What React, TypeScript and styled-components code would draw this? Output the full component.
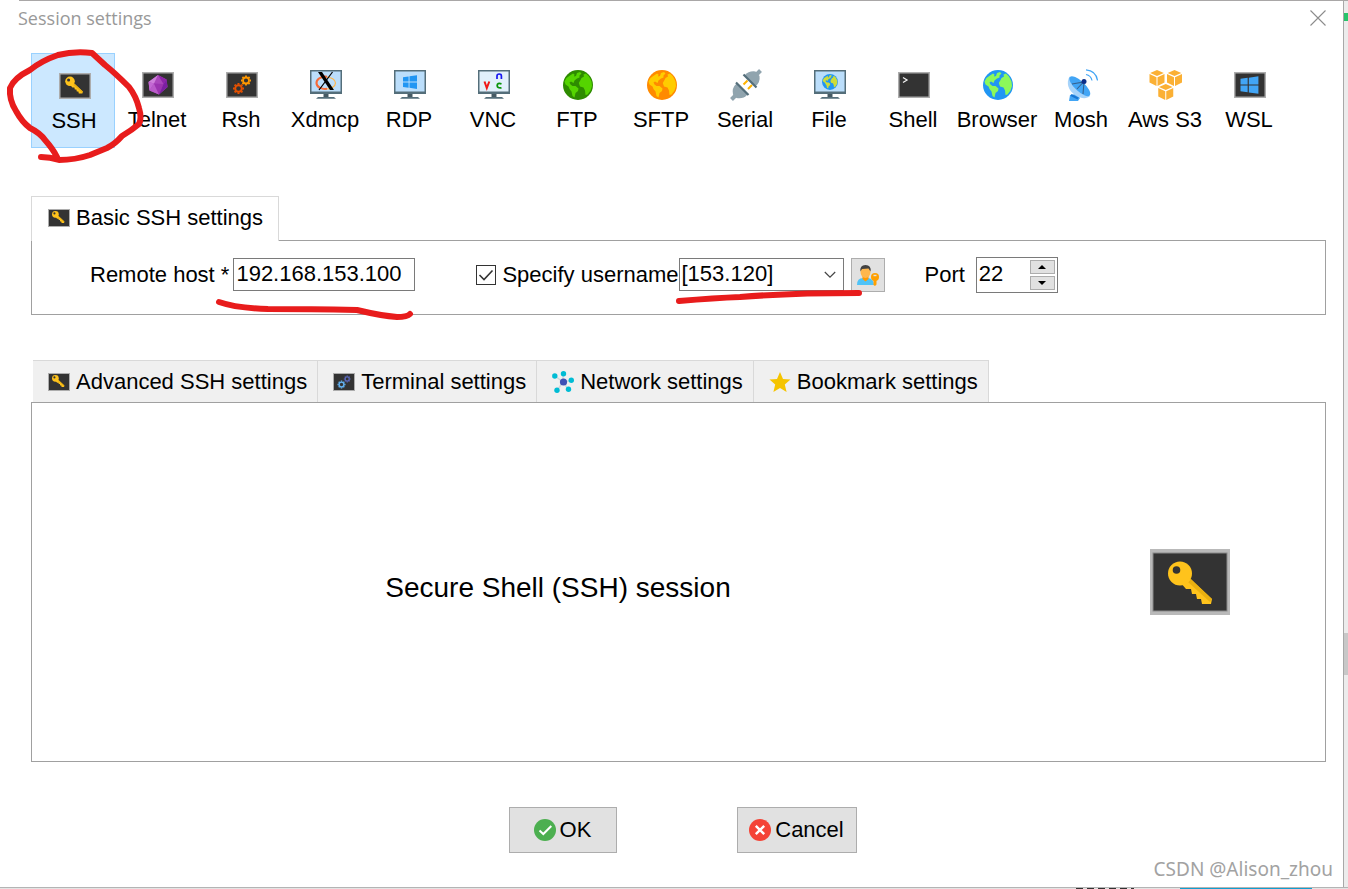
import React, { useState } from 'react';
import styled, { createGlobalStyle } from 'styled-components';

const GlobalStyle = createGlobalStyle`
  *, *::before, *::after { box-sizing: border-box; }
  body {
    margin: 0;
    background: #e9e9e9;
    color: #000;
    font-family: "Liberation Sans", Arial, sans-serif;
    font-size: 22px;
    line-height: 26px;
  }
  button, input, select { font: inherit; color: inherit; margin: 0; }
  svg { display: block; flex: none; }
`;

/* ---------- layout ---------- */

const Desktop = styled.div`
  position: relative;
  display: flex;
  flex-direction: column;
  min-height: 100vh;
`;

const Middle = styled.div`
  display: flex;
  flex: 1;
`;

const Dialog = styled.main`
  position: relative;
  display: flex;
  flex: 1;
  flex-direction: column;
  min-width: 0;
  background: #fff;
  border-right: 1px solid #a8a8a8;
`;

const SideStrip = styled.div`
  display: flex;
  flex-direction: column;
  width: 4px;
  background: #ececec;
`;

const SideBlock = styled.span<{ $top: number; $height: number; $color: string }>`
  margin-top: ${(p) => p.$top}px;
  height: ${(p) => p.$height}px;
  background: ${(p) => p.$color};
`;

const EdgeLine = styled.div<{ $height: number }>`
  display: flex;
  flex: none;
  height: ${(p) => p.$height}px;
  padding-left: 19px;
  background: #fff;
  &::before {
    content: "";
    flex: 1;
    background: #a9a7a7;
  }
`;

const BottomStrip = styled.div`
  display: flex;
  flex: none;
  justify-content: flex-end;
  gap: 46px;
  height: 2px;
  padding-right: 36px;
  border-top: 1px solid #b4b4b4;
  background: #e4e4e4;
  &::before {
    content: "";
    width: 58px;
    background: repeating-linear-gradient(90deg, #333 0 7px, #e4e4e4 7px 11px);
  }
  &::after {
    content: "";
    width: 132px;
    background: #0f9fd0;
  }
`;

const TitleBar = styled.header`
  display: flex;
  align-items: center;
  justify-content: space-between;
  height: 34px;
  padding: 0 17px 0 18px;
`;

const Title = styled.h1`
  margin: 0;
  color: #999;
  font: 400 18px/24px "Open Sans", "Noto Sans", sans-serif;
`;

const CloseButton = styled.button`
  padding: 0;
  border: 0;
  background: none;
`;

const Toolbar = styled.nav`
  display: flex;
  padding: 18px 17px 0 31px;
`;

const Tool = styled.button<{ $active?: boolean }>`
  display: flex;
  flex-direction: column;
  align-items: center;
  gap: 6px;
  width: 84px;
  height: 95px;
  padding: ${(p) => (p.$active ? '16px 0 0 2px' : '15px 0 0')};
  border: 1px solid ${(p) => (p.$active ? '#99d1ff' : 'transparent')};
  background: ${(p) => (p.$active ? '#cce8ff' : 'transparent')};
  white-space: nowrap;
`;

const Section = styled.section<{ $top: number }>`
  margin: ${(p) => p.$top}px 17px 0 31px;
`;

const MainTab = styled.button`
  position: relative;
  display: flex;
  align-items: center;
  gap: 6px;
  height: 45px;
  margin-bottom: -1px;
  padding: 0 15px 3px 16px;
  border: 1px solid #d9d9d9;
  border-bottom: 0;
  background: #fff;
`;

const BasicPanel = styled.div`
  display: flex;
  align-items: center;
  height: 75px;
  padding: 0 58px 6px;
  border: 1px solid #a0a0a0;
`;

const Field = styled.div<{ $gap: number; $after: number }>`
  display: flex;
  align-items: center;
  gap: ${(p) => p.$gap}px;
  margin-right: ${(p) => p.$after}px;
  white-space: nowrap;
`;

const HostInput = styled.input`
  width: 182px;
  height: 33px;
  padding: 0 2px 2px;
  border: 1px solid #7a7a7a;
  background: #fff;
`;

const CheckBox = styled.span`
  display: grid;
  width: 20px;
  height: 20px;
  & > * { grid-area: 1 / 1; }
  & > svg { pointer-events: none; }
`;

const CheckInput = styled.input`
  appearance: none;
  width: 20px;
  height: 20px;
  border: 1px solid #333;
  background: #fff;
  & + svg { visibility: hidden; }
  &:checked + svg { visibility: visible; }
`;

const SelectWrap = styled.span`
  display: grid;
  align-items: center;
  width: 165px;
  height: 33px;
  & > * { grid-area: 1 / 1; }
  & > svg { justify-self: end; margin-right: 8px; pointer-events: none; }
`;

const UserSelect = styled.select`
  appearance: none;
  width: 100%;
  height: 33px;
  padding: 0 24px 2px 2px;
  border: 1px solid #7a7a7a;
  border-radius: 0;
  background: #fff;
`;

const UserButton = styled.button`
  display: flex;
  align-items: center;
  justify-content: center;
  width: 34px;
  height: 34px;
  margin-left: 2px;
  padding: 0;
  border: 1px solid #adadad;
  background: #e1e1e1;
`;

const Spinner = styled.span`
  display: flex;
  width: 82px;
  height: 36px;
  padding: 2px;
  border: 1px solid #7a7a7a;
`;

const PortInput = styled.input`
  flex: 1;
  min-width: 0;
  padding: 0 0 2px;
  border: 0;
  background: none;
`;

const SpinButtons = styled.span`
  display: flex;
  flex-direction: column;
  gap: 2px;
`;

const SpinButton = styled.button`
  display: flex;
  align-items: center;
  justify-content: center;
  width: 25px;
  height: 14px;
  padding: 0;
  border: 1px solid #adadad;
  background: #e1e1e1;
`;

const TabRow = styled.div`
  display: flex;
  padding-left: 2px;
`;

const SubTab = styled.button`
  display: flex;
  align-items: center;
  gap: 6px;
  height: 42px;
  padding: 0 10px 0 15px;
  border: 0 solid #d9d9d9;
  border-width: 1px 1px 0 0;
  background: #f0f0f0;
  white-space: nowrap;
`;

const SessionPanel = styled.div`
  display: grid;
  grid-template-columns: 1fr 80px;
  column-gap: 66px;
  align-items: center;
  height: 360px;
  padding-right: 95px;
  border: 1px solid #a0a0a0;
`;

const SessionName = styled.h2`
  margin: 0;
  padding-top: 12px;
  font-size: 28px;
  font-weight: 400;
  line-height: 34px;
  text-align: center;
`;

const Footer = styled.footer`
  display: flex;
  justify-content: center;
  gap: 120px;
  padding: 45px 0 34px 22px;
`;

const DialogButton = styled.button<{ $width: number }>`
  display: flex;
  align-items: center;
  justify-content: center;
  gap: 4px;
  width: ${(p) => p.$width}px;
  height: 46px;
  padding: 0;
  border: 1px solid #adadad;
  background: #e1e1e1;
`;

const Watermark = styled.span`
  position: absolute;
  right: 10px;
  bottom: 6px;
  color: #a2a2a2;
  font: 400 19px/24px "Noto Sans", sans-serif;
`;

const Ink = styled.svg`
  position: absolute;
  top: 0;
  left: 0;
  pointer-events: none;
`;

/* ---------- icons ---------- */

const ToolIcon = ({ children }: { children: React.ReactNode }) => (
  <svg width="34" height="32" viewBox="-2 0 34 32" aria-hidden="true">{children}</svg>
);

const TerminalFrame = () => (
  <rect x="0.75" y="3.75" width="30.5" height="24.5" fill="#333" stroke="#adadad" strokeWidth="1.5" />
);

const KeyShape = () => (
  <>
    <path d="M37 27 L62 50 L61 55 L52 55 L51 50 L47 50 L46 45 L42 45 L41 40 L36 40 L30 33Z" fill="#ffc31c" />
    <path d="M38 33 L60 53 L62 50 L41 30Z" fill="#eab010" />
    <circle cx="30" cy="24.500" r="12" fill="#ffc31c" />
    <circle cx="26.500" cy="21" r="3.800" fill="#333" />
  </>
);

const Gear = ({ x, y, r, color }: { x: number; y: number; r: number; color: string }) => (
  <g transform={`translate(${x} ${y})`} stroke={color} fill="none">
    <circle r={r * 0.6} strokeWidth={r * 0.36} />
    {[0, 45, 90, 135, 180, 225, 270, 315].map((a) => (
      <path key={a} d={`M0 ${-r * 0.7}V${-r}`} strokeWidth={r * 0.36} transform={`rotate(${a})`} />
    ))}
  </g>
);

const WindowsLogo = ({ color }: { color: string }) => (
  <path
    d="M0 2.200 5.600 1.400V6.600H0ZM6.500 1.300 14 0.200V6.600H6.500ZM0 7.500H5.600V12.700L0 11.900ZM6.500 7.500H14V13.900L6.500 12.800Z"
    fill={color}
  />
);

const Monitor = ({ screen = '#bbdefb' }: { screen?: string }) => (
  <>
    <rect x="0.750" y="1.750" width="30.500" height="22.500" fill={screen} stroke="#546e7a" strokeWidth="1.500" />
    <path d="M0 22.500H32V25H0Z" fill="#546e7a" />
    <path d="M13.500 25H18.500V28H13.500Z" fill="#455a64" />
    <path d="M6 29.800 8 28H24L26 29.800Z" fill="#546e7a" />
  </>
);

const Globe = ({ sea, land }: { sea: string; land: string }) => (
  <>
    <circle cx="16" cy="16" r="15" fill={sea} />
    <path
      d="M8 6.500 11 4.500 12.500 5.500 12 7.500 14 7 15 4 18 3 19.500 4.500 17.500 6.500 17.500 8.500 15 9.500 12.500 11.500 11.500 14 9 12.500 7.500 13.500 8.500 15.500 10.500 17 13.500 17 16.500 19.500 16 22 13.500 24 12.500 28.500 10.500 27 9.500 22.500 7.500 20 6.500 17.500 3.500 15.500 2.500 12.500 4.500 9Z"
      fill={land}
    />
    <path
      d="M19.500 9 22 7.500 21.500 5.500 24 4.500 27 7.500 29.500 12.500 30 17 28.500 21.500 25.500 25.500 23.500 26 23 21.500 21.500 18.500 18 17.500 16.800 14 18.500 11Z"
      fill={land}
    />
  </>
);

const Cube = ({ x, y }: { x: number; y: number }) => (
  <g transform={`translate(${x} ${y})`} fill="#fbb034">
    <path d="M7.500 0 14.300 3 7.500 6 0.700 3Z" />
    <path d="M0 4 7 7.200V16L0 12.500Z" />
    <path d="M15 4 8 7.200V16L15 12.500Z" />
  </g>
);

const SshIcon = () => (
  <ToolIcon>
    <TerminalFrame />
    <g transform="translate(-1 1.500) scale(.4)"><KeyShape /></g>
  </ToolIcon>
);

const SmallKeyIcon = () => (
  <svg width="22" height="22" viewBox="0 0 22 22" aria-hidden="true">
    <rect x="0.500" y="2.500" width="21" height="17" fill="#333" stroke="#adadad" />
    <g transform="translate(-1 0.500) scale(.28)"><KeyShape /></g>
  </svg>
);

const TelnetIcon = () => (
  <ToolIcon>
    <TerminalFrame />
    <path d="M16 6 24.500 10.500 25.500 18 17 25.500 7.500 21.500 6.500 13Z" fill="#ab47bc" />
    <path d="M16 6 6.500 13 12 14.500Z" fill="#ce7fdb" />
    <path d="M6.500 13 12 14.500 7.500 21.500Z" fill="#c468d4" />
    <path d="M12 14.500 7.500 21.500 17 25.500Z" fill="#ba5bca" />
    <path d="M16 6 24.500 10.500 21.500 15Z" fill="#8e24aa" />
    <path d="M12 14.500 21.500 15 17 25.500Z" fill="#9c34b0" />
    <path d="M24.500 10.500 25.500 18 17 25.500 21.500 15Z" fill="#7b1fa2" />
  </ToolIcon>
);

const RshIcon = () => (
  <ToolIcon>
    <TerminalFrame />
    <Gear x={12.500} y={19.500} r={5.500} color="#e65100" />
    <Gear x={20} y={11.500} r={5} color="#ff9800" />
  </ToolIcon>
);

const XdmcpIcon = () => (
  <ToolIcon>
    <Monitor />
    <ellipse cx="16" cy="14" rx="9.500" ry="6" fill="none" stroke="#ffb74d" strokeWidth="1.200" />
    <path d="M17 7.700C10 7 6 11 6.500 14.500 7 18.500 12 20.500 17 19.800" fill="none" stroke="#f4693a" strokeWidth="2" />
    <path d="M8 3H12L24 21H20Z" fill="#000" />
    <path d="M22.500 3 9 21" stroke="#000" strokeWidth="1.200" />
  </ToolIcon>
);

const RdpIcon = () => (
  <ToolIcon>
    <Monitor />
    <g transform="translate(9 6)"><WindowsLogo color="#2196f3" /></g>
  </ToolIcon>
);

const VncIcon = () => (
  <ToolIcon>
    <Monitor screen="#e1f0fb" />
    <path d="M6.500 12.500 8.800 19 11.300 12.500" fill="none" stroke="#f01818" strokeWidth="2" />
    <path d="M19 10V7Q19 5 21.200 5T23.400 7V10" fill="none" stroke="#1818f0" strokeWidth="1.700" />
    <path d="M23.500 14.800Q19.200 13.500 19.200 16.500T23.500 18.800" fill="none" stroke="#089408" strokeWidth="1.800" />
  </ToolIcon>
);

const FtpIcon = () => <ToolIcon><Globe sea="#2e8b00" land="#55d400" /></ToolIcon>;
const SftpIcon = () => <ToolIcon><Globe sea="#ff8a00" land="#ffcc00" /></ToolIcon>;
const BrowserIcon = () => <ToolIcon><Globe sea="#2196f3" land="#8cf95a" /></ToolIcon>;

const SerialIcon = () => (
  <ToolIcon>
    <path d="M13.500 15.500 17.500 11.500M18 20 22 16" stroke="#ffb300" strokeWidth="2" />
    <path d="M1.500 30.500 6 26" stroke="#90a4ae" strokeWidth="4" />
    <path d="M30.500 1.500 26 6" stroke="#90a4ae" strokeWidth="4" />
    <path d="M6.500 14.500 17.500 25.500Q13 30.500 6.500 29L3 25.500Q1.500 19 6.500 14.500Z" fill="#90a4ae" />
    <path d="M14.500 6.500 25.500 17.500Q30.500 13 29.500 7L25.500 2.500Q19 1.500 14.500 6.500Z" fill="#90a4ae" />
    <path d="M6 13.500 18.500 26M13.500 5.500 26.500 18.500" stroke="#546e7a" strokeWidth="2.200" />
  </ToolIcon>
);

const FileIcon = () => (
  <ToolIcon>
    <Monitor />
    <g transform="translate(7.500 4.500) scale(.53)"><Globe sea="#2196f3" land="#cddc39" /></g>
  </ToolIcon>
);

const ShellIcon = () => (
  <ToolIcon>
    <TerminalFrame />
    <path d="M5 8.500 9 11 5 13.500" fill="none" stroke="#f2f2f2" strokeWidth="1.300" />
  </ToolIcon>
);

const MoshIcon = () => (
  <ToolIcon>
    <path d="M4 26 10 25 14 29 12 32H3Z" fill="#42a5f5" />
    <path d="M5 26 12 29.500" stroke="#1976d2" strokeWidth="2" />
    <path d="M3.500 7.500C0 14 2 21 9 26 15 30 21 30 24 27Z" fill="#a6d3fa" />
    <ellipse cx="13.800" cy="17.200" rx="13.500" ry="5" transform="rotate(43 13.800 17.200)" fill="#42a5f5" />
    <path d="M6 15 18 13 17 25M17 13.500 11 20" fill="none" stroke="#37618d" strokeWidth="1.100" />
    <circle cx="18" cy="12.500" r="2.500" fill="#0d2f8a" />
    <path d="M20 5.500Q25 6.500 26 11.500M20 0.800Q30 1.500 31.500 11.500" fill="none" stroke="#42a5f5" strokeWidth="1.200" />
  </ToolIcon>
);

const AwsIcon = () => (
  <ToolIcon>
    <Cube x={-0.500} y={1} />
    <Cube x={17} y={1} />
    <Cube x={8.250} y={15} />
  </ToolIcon>
);

const WslIcon = () => (
  <ToolIcon>
    <TerminalFrame />
    <g transform="translate(6.500 7) scale(1.280)"><WindowsLogo color="#42a5f5" /></g>
  </ToolIcon>
);

const GearsIcon = () => (
  <svg width="22" height="22" viewBox="0 0 22 22" aria-hidden="true">
    <rect x="0.500" y="2.500" width="21" height="17" fill="#333" stroke="#adadad" />
    <Gear x={8.500} y={13.500} r={4} color="#64b5f6" />
    <Gear x={14.200} y={8} r={3.400} color="#5c6bc0" />
  </svg>
);

const NetworkIcon = () => (
  <svg width="22" height="22" viewBox="0 0 22 22" aria-hidden="true">
    <path d="M11 11 3 5M11 11V3M11 11 19.500 9.500M11 11 16.500 18.500M11 11 5 19.500" stroke="#cfd8dc" strokeWidth="1.500" />
    <g fill="#00bcd4">
      <circle cx="2.800" cy="5" r="2.700" /><circle cx="11.500" cy="2.800" r="2.700" />
      <circle cx="19.300" cy="9.300" r="2.700" /><circle cx="16.500" cy="18.300" r="2.700" />
      <circle cx="5" cy="19.300" r="2.700" />
    </g>
    <circle cx="11.500" cy="11" r="3.600" fill="#3f51b5" />
  </svg>
);

const StarIcon = () => (
  <svg width="22" height="22" viewBox="0 0 22 22" aria-hidden="true">
    <path d="M11 1 14 8 21.500 8.500 15.800 13.400 17.600 21 11 17 4.400 21 6.200 13.400 0.500 8.500 8 8Z" fill="#f5c400" />
  </svg>
);

const UserKeyIcon = () => (
  <svg width="24" height="24" viewBox="0 0 24 24" aria-hidden="true">
    <path d="M1 22Q1 15 7 15H12Q18 16 18 22Z" fill="#4fc3f7" />
    <path d="M6.500 12H12.500V16L9.500 18.500 6.500 16Z" fill="#ff9800" />
    <ellipse cx="9.500" cy="9" rx="5" ry="6" fill="#ffb74d" />
    <path d="M4.500 8.500Q3.500 2 9.500 2T14.500 8.500L12.500 5.500 6 6Z" fill="#424242" />
    <circle cx="19" cy="14" r="4" fill="#ffa000" />
    <path d="M17.500 16H20.500V21.500L19 23 17.500 22Z" fill="#ffa000" />
    <path d="M17.500 12.500H20.500" stroke="#e1e1e1" strokeWidth="1.400" />
  </svg>
);

const tools: { label: string; icon: React.FC }[] = [
  { label: 'SSH', icon: SshIcon },
  { label: 'Telnet', icon: TelnetIcon },
  { label: 'Rsh', icon: RshIcon },
  { label: 'Xdmcp', icon: XdmcpIcon },
  { label: 'RDP', icon: RdpIcon },
  { label: 'VNC', icon: VncIcon },
  { label: 'FTP', icon: FtpIcon },
  { label: 'SFTP', icon: SftpIcon },
  { label: 'Serial', icon: SerialIcon },
  { label: 'File', icon: FileIcon },
  { label: 'Shell', icon: ShellIcon },
  { label: 'Browser', icon: BrowserIcon },
  { label: 'Mosh', icon: MoshIcon },
  { label: 'Aws S3', icon: AwsIcon },
  { label: 'WSL', icon: WslIcon },
];

const subTabs: { label: string; icon: React.FC }[] = [
  { label: 'Advanced SSH settings', icon: SmallKeyIcon },
  { label: 'Terminal settings', icon: GearsIcon },
  { label: 'Network settings', icon: NetworkIcon },
  { label: 'Bookmark settings', icon: StarIcon },
];

export default function App() {
  const [host, setHost] = useState('192.168.153.100');
  const [named, setNamed] = useState(true);
  const [port, setPort] = useState(22);

  return (
    <Desktop>
      <GlobalStyle />
      <EdgeLine $height={1} />
      <Middle>
        <Dialog>
          <TitleBar>
            <Title>Session settings</Title>
            <CloseButton aria-label="Close">
              <svg width="16" height="16" viewBox="0 0 16 16"><path d="M0.500 0.500 15.500 15.500M15.500 0.500 0.500 15.500" stroke="#8c8c8c" strokeWidth="1.100" /></svg>
            </CloseButton>
          </TitleBar>

          <Toolbar aria-label="Session type">
            {tools.map(({ label, icon: Icon }, i) => (
              <Tool key={label} $active={i === 0}><Icon />{label}</Tool>
            ))}
          </Toolbar>

          <Section $top={48}>
            <MainTab><SmallKeyIcon />Basic SSH settings</MainTab>
            <BasicPanel>
              <Field $gap={4} $after={61}>
                <label htmlFor="host">Remote host *</label>
                <HostInput id="host" value={host} onChange={(e) => setHost(e.target.value)} />
              </Field>
              <Field $gap={6} $after={0}>
                <CheckBox>
                  <CheckInput id="named" type="checkbox" checked={named} onChange={(e) => setNamed(e.target.checked)} />
                  <svg width="20" height="20" viewBox="0 0 20 20"><path d="M3.500 10 8 14.500 16.500 5.500" fill="none" stroke="#333" strokeWidth="1.600" /></svg>
                </CheckBox>
                <label htmlFor="named">Specify username</label>
              </Field>
              <Field $gap={5} $after={40}>
                <SelectWrap>
                  <UserSelect aria-label="Username" defaultValue="[153.120]">
                    <option>[153.120]</option>
                  </UserSelect>
                  <svg width="12" height="8" viewBox="0 0 12 8"><path d="M0.800 1 6 6.200 11.200 1" fill="none" stroke="#444" strokeWidth="1.200" /></svg>
                </SelectWrap>
                <UserButton aria-label="Manage users"><UserKeyIcon /></UserButton>
              </Field>
              <Field $gap={11} $after={0}>
                <label htmlFor="port">Port</label>
                <Spinner>
                  <PortInput id="port" value={port} onChange={(e) => setPort(Number(e.target.value) || 0)} />
                  <SpinButtons>
                    <SpinButton aria-label="Increase port" onClick={() => setPort(port + 1)}>
                      <svg width="8" height="4" viewBox="0 0 8 4"><path d="M0 4 4 0 8 4Z" /></svg>
                    </SpinButton>
                    <SpinButton aria-label="Decrease port" onClick={() => setPort(port - 1)}>
                      <svg width="8" height="4" viewBox="0 0 8 4"><path d="M0 0 4 4 8 0Z" /></svg>
                    </SpinButton>
                  </SpinButtons>
                </Spinner>
              </Field>
            </BasicPanel>
          </Section>

          <Section $top={45}>
            <TabRow>
              {subTabs.map(({ label, icon: Icon }) => (
                <SubTab key={label}><Icon />{label}</SubTab>
              ))}
            </TabRow>
            <SessionPanel>
              <SessionName>Secure Shell (SSH) session</SessionName>
              <svg width="80" height="66" viewBox="0 0 80 66" aria-hidden="true">
                <rect width="80" height="66" fill="#b9b9b9" />
                <rect x="3" y="4" width="74" height="58" fill="#333" stroke="#8a8a8a" />
                <KeyShape />
              </svg>
            </SessionPanel>
          </Section>

          <Footer>
            <DialogButton $width={108}>
              <svg width="22" height="22" viewBox="0 0 22 22" aria-hidden="true">
                <circle cx="11" cy="11" r="11" fill="#4caf50" />
                <path d="M5.500 11.500 9.300 15 17.300 7" fill="none" stroke="#fff" strokeWidth="2" />
              </svg>
              OK
            </DialogButton>
            <DialogButton $width={120}>
              <svg width="22" height="22" viewBox="0 0 22 22" aria-hidden="true">
                <circle cx="11" cy="11" r="11" fill="#f44336" />
                <path d="M6.800 6.800 15.200 15.200M15.200 6.800 6.800 15.200" stroke="#fff" strokeWidth="2.400" />
              </svg>
              Cancel
            </DialogButton>
          </Footer>
          <Watermark>CSDN @Alison_zhou</Watermark>
        </Dialog>
        <SideStrip>
          <SideBlock $top={12} $height={8} $color="#27c46b" />
          <SideBlock $top={612} $height={42} $color="#c8c8c8" />
        </SideStrip>
      </Middle>
      <BottomStrip />

      <Ink width="900" height="330" viewBox="0 0 900 330" fill="none" stroke="#e81c1c" strokeWidth="6" strokeLinecap="round" strokeLinejoin="round" aria-hidden="true">
        <path d="M41 157Q50 157 59 160 75 160 90 155L107 148Q115 144 122 136 132 130 139 124 142 118 139 108 136 96 129 87 115 73 105 65L92 53Q74 51 58 55 41 61 30 70 14 78 10 88 9 100 16 111 22 122 30 128 40 133 45 140 53 149 57 157" />
        <path d="M219 302Q236 308 268 309 310 309 357 310 382 316 397 317 407 317 410 314" />
        <path d="M679 301Q715 298 740 297 790 293 859 293" />
      </Ink>
    </Desktop>
  );
}
